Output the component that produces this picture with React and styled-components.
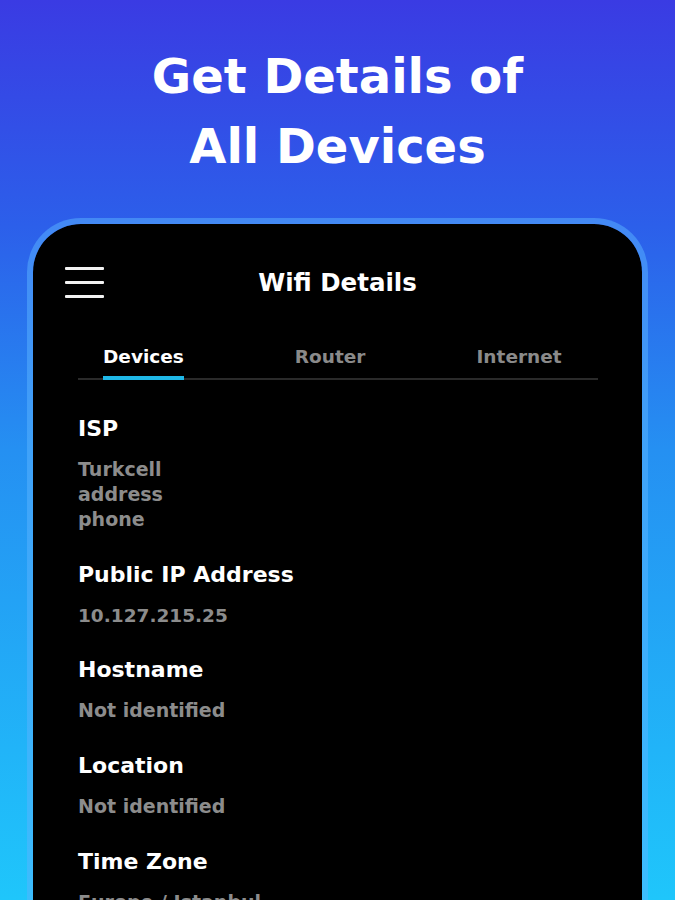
import React from "react";
import styled, { createGlobalStyle } from "styled-components";

const Global = createGlobalStyle`
  html, body { margin: 0; padding: 0; }
  body {
    width: 675px;
    height: 900px;
    overflow: hidden;
    font-family: "DejaVu Sans", "Open Sans", sans-serif;
    -webkit-font-smoothing: antialiased;
  }
`;

const Page = styled.div`
  width: 675px;
  height: 900px;
  overflow: hidden;
  background: linear-gradient(180deg, #3a3be3 0%, #2c5fea 25%, #2590f2 50%, #1fc6fb 100%);
  display: flex;
  flex-direction: column;
  align-items: center;
  padding-top: 41px;
  box-sizing: border-box;
`;

const Heading = styled.h1`
  margin: 0;
  color: #ffffff;
  font-family: "DejaVu Sans", sans-serif;
  font-weight: 700;
  font-size: 48px;
  line-height: 70px;
  text-align: center;
`;

const Phone = styled.div`
  margin-top: 37px;
  width: 621px;
  flex: 1;
  box-sizing: border-box;
  border: 6px solid rgba(90, 180, 255, 0.5);
  border-bottom: none;
  border-radius: 54px 54px 0 0;
  background-clip: padding-box;
  background-color: #000;
  padding-top: 36px;
`;

const Header = styled.div`
  display: grid;
  grid-template-columns: 1fr auto 1fr;
  align-items: center;
  height: 44px;
  padding: 0 32px;
`;

const Burger = styled.div`
  display: flex;
  flex-direction: column;
  gap: 11px;
  width: 39px;
`;

const BurgerLine = styled.span`
  display: block;
  height: 3px;
  background: #f2f2f2;
  border-radius: 1px;
`;

const Title = styled.div`
  color: #ffffff;
  font-size: 24.5px;
  font-weight: 700;
`;

const TabBar = styled.div`
  display: flex;
  gap: 111px;
  margin: 41px 44px 0 45px;
  padding-left: 25px;
  box-shadow: inset 0 -2px 0 #2a2a2a;
`;

const Tab = styled.div`
  font-size: 18.5px;
  font-weight: 700;
  line-height: 24px;
  padding-bottom: 7px;
  border-bottom: 4px solid ${(p) => (p.$active ? "#1fb8e8" : "transparent")};
  color: ${(p) => (p.$active ? "#ffffff" : "#8a8a8a")};
`;

const Content = styled.div`
  display: flex;
  flex-direction: column;
  gap: 28.7px;
  padding: 35px 45px 0;
`;

const Item = styled.div`
  display: flex;
  flex-direction: column;
  gap: 14px;
`;

const Label = styled.div`
  color: #ffffff;
  font-size: 22px;
  font-weight: 700;
  line-height: 28px;
`;

const Value = styled.div`
  color: #8c8c8c;
  font-size: ${(p) => (p.$mono ? "18.5px" : "19px")};
  font-weight: 700;
  line-height: 25px;
`;

const items = [
  { label: "ISP", values: ["Turkcell", "address", "phone"] },
  { label: "Public IP Address", values: ["10.127.215.25"], mono: true },
  { label: "Hostname", values: ["Not identified"] },
  { label: "Location", values: ["Not identified"] },
  { label: "Time Zone", values: ["Europe / Istanbul"] },
];

export default function App() {
  return (
    <>
      <Global />
      <Page>
        <Heading>
          Get Details of
          <br />
          All Devices
        </Heading>
        <Phone>
          <Header>
            <Burger>
              <BurgerLine />
              <BurgerLine />
              <BurgerLine />
            </Burger>
            <Title>Wifi Details</Title>
            <span />
          </Header>
          <TabBar>
            <Tab $active>Devices</Tab>
            <Tab>Router</Tab>
            <Tab>Internet</Tab>
          </TabBar>
          <Content>
            {items.map((it) => (
              <Item key={it.label}>
                <Label>{it.label}</Label>
                <div>
                  {it.values.map((v) => (
                    <Value key={v} $mono={it.mono}>
                      {v}
                    </Value>
                  ))}
                </div>
              </Item>
            ))}
          </Content>
        </Phone>
      </Page>
    </>
  );
}
